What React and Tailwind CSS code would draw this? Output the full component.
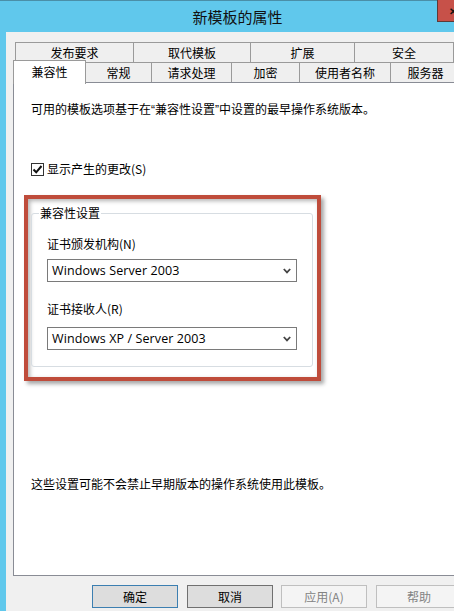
import React from "react";

const Chevron = () => (
  <svg width="8" height="6" viewBox="0 0 8 6" className="shrink-0">
    <path d="M0.8 1 L4 4.4 L7.2 1" fill="none" stroke="#444" strokeWidth="1.8" />
  </svg>
);

const Select = ({ value }) => (
  <div className="w-[250px] h-[23px] border border-[#7a7a7a] bg-white flex items-center pl-[4px] pr-[5px]">
    <span className="flex-1 font-['Open_Sans',sans-serif] text-[12.5px] leading-[16px] text-black tracking-[0.1px]">{value}</span>
    <Chevron />
  </div>
);

export default function App() {
  const row1 = [
    { t: "发布要求", w: "w-[118px]" },
    { t: "取代模板", w: "w-[117px]" },
    { t: "扩展", w: "w-[104px]" },
  ];
  const row2 = [
    { t: "常规", w: "w-[66px]" },
    { t: "请求处理", w: "w-[80px]" },
    { t: "加密", w: "w-[68px]" },
    { t: "使用者名称", w: "w-[91px]" },
    { t: "服务器", w: "w-[70px]" },
  ];
  return (
    <div className="w-[454px] h-[611px] overflow-hidden bg-[#60c8ec] flex flex-col font-['Noto_Sans_CJK_SC',sans-serif] text-[12px] leading-[16px] text-black">
      {/* title bar */}
      <div className="h-[32px] shrink-0 relative flex items-center justify-center pl-[21px] border-t border-[#4a8fa8]">
        <span className="text-[15px] text-[#111]">新模板的属性</span>
        <div className="absolute right-[-14px] top-[-1px] w-[31px] h-[22px] bg-[#c75149] border-l border-b border-[#5e3a37] flex items-center justify-center">
          <span className="text-[#111] text-[10px] font-bold leading-none">✕</span>
        </div>
      </div>
      {/* body */}
      <div className="flex-1 ml-[6px] w-[470px] bg-[#f0f0f0] flex flex-col">
        <div className="pt-[10px] pl-[7px]">
          {/* row 1 tabs */}
          <div className="flex h-[20px] ml-[2px]">
            {row1.map((r) => (
              <div key={r.t} className={`${r.w} h-full border-l border-t border-[#9a9a9a] bg-[#efefef] flex items-center justify-center`}>
                {r.t}
              </div>
            ))}
            <div className="w-[100px] h-full border-l border-t border-r border-[#9a9a9a] bg-[#efefef] flex items-center justify-center">
              安全
            </div>
          </div>
          {/* row 2 tabs */}
          <div className="flex h-[20px]">
            <div className="relative z-10 -mt-[2px] w-[73px] h-[24px] bg-white border-l border-t border-r border-[#9a9a9a] flex items-start justify-center pt-[3px]">
              兼容性
            </div>
            {row2.map((r) => (
              <div key={r.t} className={`${r.w} h-full border-t border-r border-[#9a9a9a] bg-[#efefef] flex items-center justify-center`}>
                {r.t}
              </div>
            ))}
          </div>
          {/* panel */}
          <div className="w-[460px] h-[494px] bg-white border border-[#898c95] flex flex-col">
            <div className="mt-[18px] pl-[17px]">
              可用的模板选项基于在<span className="font-['Liberation_Sans',sans-serif]">“</span>兼容性设置<span className="font-['Liberation_Sans',sans-serif]">”</span>中设置的最早操作系统版本。
            </div>
            <div className="mt-[43px] pl-[17px] flex items-center gap-[3px]">
              <div className="w-[13px] h-[13px] border border-[#333] bg-white flex items-center justify-center">
                <svg width="11" height="11" viewBox="0 0 11 11">
                  <path d="M1.5 5.5 L4.2 8.3 L9.5 2" fill="none" stroke="#111" strokeWidth="2" />
                </svg>
              </div>
              <span>显示产生的更改(S)</span>
            </div>
            {/* red highlight */}
            <div className="mt-[18px] ml-[10px] w-[297px] h-[186px] border-[4px] border-[#bf4c3b] shadow-[3px_3px_4px_rgba(0,0,0,0.35),inset_2px_2px_4px_rgba(0,0,0,0.3)]">
              <fieldset className="mt-[6px] ml-[3px] w-[280px] border border-[#d7dde2] rounded-[3px] px-[15px] pb-[16px]">
                <legend className="-ml-[8px] px-[1px] leading-[16px]">兼容性设置</legend>
                <div className="mt-[15px]">证书颁发机构(N)</div>
                <div className="mt-[7px]"><Select value="Windows Server 2003" /></div>
                <div className="mt-[19px]">证书接收人(R)</div>
                <div className="mt-[10px]"><Select value="Windows XP / Server 2003" /></div>
              </fieldset>
            </div>
            <div className="mt-[95px] pl-[17px]">这些设置可能不会禁止早期版本的操作系统使用此模板。</div>
          </div>
        </div>
        {/* buttons */}
        <div className="mt-[9px] pl-[86px] flex">
          <div className="w-[86px] h-[23px] bg-[#dddddd] border border-[#3c7fb1] flex items-center justify-center">确定</div>
          <div className="ml-[9px] w-[86px] h-[23px] bg-[#dddddd] border border-[#707070] flex items-center justify-center">取消</div>
          <div className="ml-[8px] w-[86px] h-[23px] bg-[#f4f4f4] border border-[#bfbfbf] text-[#838383] flex items-center justify-center">应用(A)</div>
          <div className="ml-[9px] w-[86px] h-[23px] bg-[#f4f4f4] border border-[#bfbfbf] text-[#838383] flex items-center justify-center">帮助</div>
        </div>
      </div>
    </div>
  );
}
